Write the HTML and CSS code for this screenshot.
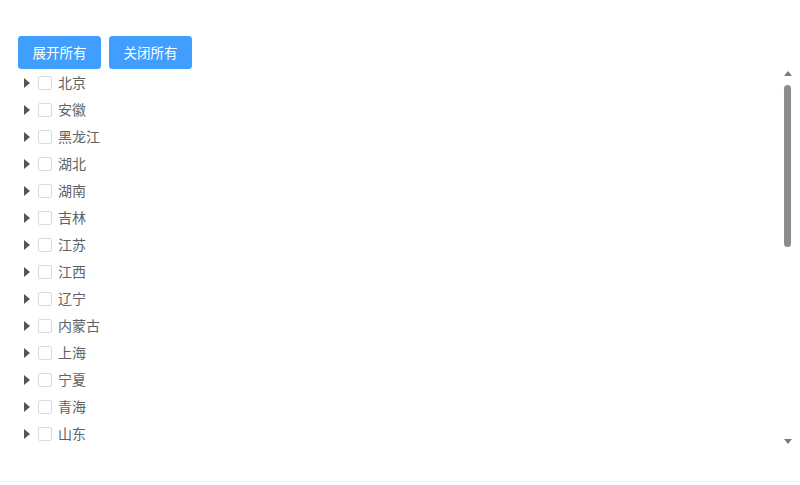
FILE: index.html
```html
<!DOCTYPE html>
<html lang="zh-CN">
<head>
    <meta charset="utf-8">
    <title>省份树</title>
    <link rel="stylesheet" href="styles.css">
</head>
<body>
    <div class="page">
        <div class="toolbar">
            <button class="btn">展开所有</button>
            <button class="btn">关闭所有</button>
        </div>
        <div class="treeWrap">
            <div class="tree">
                <div class="treeNode"><span class="caret"></span><span class="check"></span><span class="label">北京</span></div>
                <div class="treeNode"><span class="caret"></span><span class="check"></span><span class="label">安徽</span></div>
                <div class="treeNode"><span class="caret"></span><span class="check"></span><span class="label">黑龙江</span></div>
                <div class="treeNode"><span class="caret"></span><span class="check"></span><span class="label">湖北</span></div>
                <div class="treeNode"><span class="caret"></span><span class="check"></span><span class="label">湖南</span></div>
                <div class="treeNode"><span class="caret"></span><span class="check"></span><span class="label">吉林</span></div>
                <div class="treeNode"><span class="caret"></span><span class="check"></span><span class="label">江苏</span></div>
                <div class="treeNode"><span class="caret"></span><span class="check"></span><span class="label">江西</span></div>
                <div class="treeNode"><span class="caret"></span><span class="check"></span><span class="label">辽宁</span></div>
                <div class="treeNode"><span class="caret"></span><span class="check"></span><span class="label">内蒙古</span></div>
                <div class="treeNode"><span class="caret"></span><span class="check"></span><span class="label">上海</span></div>
                <div class="treeNode"><span class="caret"></span><span class="check"></span><span class="label">宁夏</span></div>
                <div class="treeNode"><span class="caret"></span><span class="check"></span><span class="label">青海</span></div>
                <div class="treeNode"><span class="caret"></span><span class="check"></span><span class="label">山东</span></div>
                <div class="treeNode"><span class="caret"></span><span class="check"></span><span class="label">山西</span></div>
                <div class="treeNode"><span class="caret"></span><span class="check"></span><span class="label">陕西</span></div>
                <div class="treeNode"><span class="caret"></span><span class="check"></span><span class="label">四川</span></div>
                <div class="treeNode"><span class="caret"></span><span class="check"></span><span class="label">天津</span></div>
                <div class="treeNode"><span class="caret"></span><span class="check"></span><span class="label">西藏</span></div>
                <div class="treeNode"><span class="caret"></span><span class="check"></span><span class="label">新疆</span></div>
                <div class="treeNode"><span class="caret"></span><span class="check"></span><span class="label">云南</span></div>
                <div class="treeNode"><span class="caret"></span><span class="check"></span><span class="label">浙江</span></div>
                <div class="treeNode"><span class="caret"></span><span class="check"></span><span class="label">重庆</span></div>
                <div class="treeNode"><span class="caret"></span><span class="check"></span><span class="label">福建</span></div>
                <div class="treeNode"><span class="caret"></span><span class="check"></span><span class="label">甘肃</span></div>
                <div class="treeNode"><span class="caret"></span><span class="check"></span><span class="label">广东</span></div>
                <div class="treeNode"><span class="caret"></span><span class="check"></span><span class="label">广西</span></div>
                <div class="treeNode"><span class="caret"></span><span class="check"></span><span class="label">贵州</span></div>
                <div class="treeNode"><span class="caret"></span><span class="check"></span><span class="label">海南</span></div>
                <div class="treeNode"><span class="caret"></span><span class="check"></span><span class="label">河北</span></div>
                <div class="treeNode"><span class="caret"></span><span class="check"></span><span class="label">河南</span></div>
                <div class="treeNode"><span class="caret"></span><span class="check"></span><span class="label">香港</span></div>
            </div>
            <!-- scrollbar drawn by hand, the headless browser hides the native one -->
            <div class="scrollBar">
                <svg class="arrowUp" width="8" height="5" viewBox="0 0 8 5"><polygon points="4,0 8,5 0,5" fill="#7a7a7a"/></svg>
                <div class="thumb"></div>
                <svg class="arrowDown" width="8" height="5" viewBox="0 0 8 5"><polygon points="0,0 8,0 4,5" fill="#7a7a7a"/></svg>
            </div>
        </div>
        <div class="footerLine"></div>
    </div>
</body>
</html>
```

FILE: styles.css
```css
body {
    margin: 0;
    background-color: #ffffff;
    font-family: "Microsoft YaHei", "Noto Sans CJK SC", sans-serif;
}

.page {
    padding: 36px 5px 0 18px;
}

.toolbar {
    display: flex;
    gap: 8px;
    height: 33px;
}

.btn {
    height: 33px;
    padding: 0 13.5px;
    border: 1px solid #409eff;
    border-radius: 3px;
    background-color: #409eff;
    color: #ffffff;
    font-family: inherit;
    font-size: 13.5px;
    line-height: 1;
}

.treeWrap {
    position: relative;
}

.tree {
    height: 385px;
    overflow-y: auto;
    scrollbar-width: none;
}

.treeNode {
    display: flex;
    align-items: center;
    height: 27px;
    color: #606266;
    font-size: 14px;
}

.caret {
    width: 0;
    height: 0;
    margin: 0 8px 0 6px;
    border-top: 5px solid transparent;
    border-bottom: 5px solid transparent;
    border-left: 6px solid #555555;
}

.check {
    width: 12px;
    height: 12px;
    border: 1px solid #d8dbe2;
    border-radius: 2px;
    margin-right: 6px;
}

.label {
    position: relative;
    top: -1px;
}

.scrollBar {
    position: absolute;
    top: 0;
    right: 0;
    width: 15px;
    height: 385px;
}

.arrowUp {
    position: absolute;
    top: 2px;
    left: 4px;
}

.thumb {
    position: absolute;
    top: 16px;
    left: 4px;
    width: 7px;
    height: 162px;
    border-radius: 4px;
    background-color: #8c8c8c;
}

.arrowDown {
    position: absolute;
    top: 370px;
    left: 4px;
}

.footerLine {
    margin-top: 27px;
    margin-left: -18px;
    margin-right: -5px;
    border-top: 1px solid #f0f0f0;
}
```
